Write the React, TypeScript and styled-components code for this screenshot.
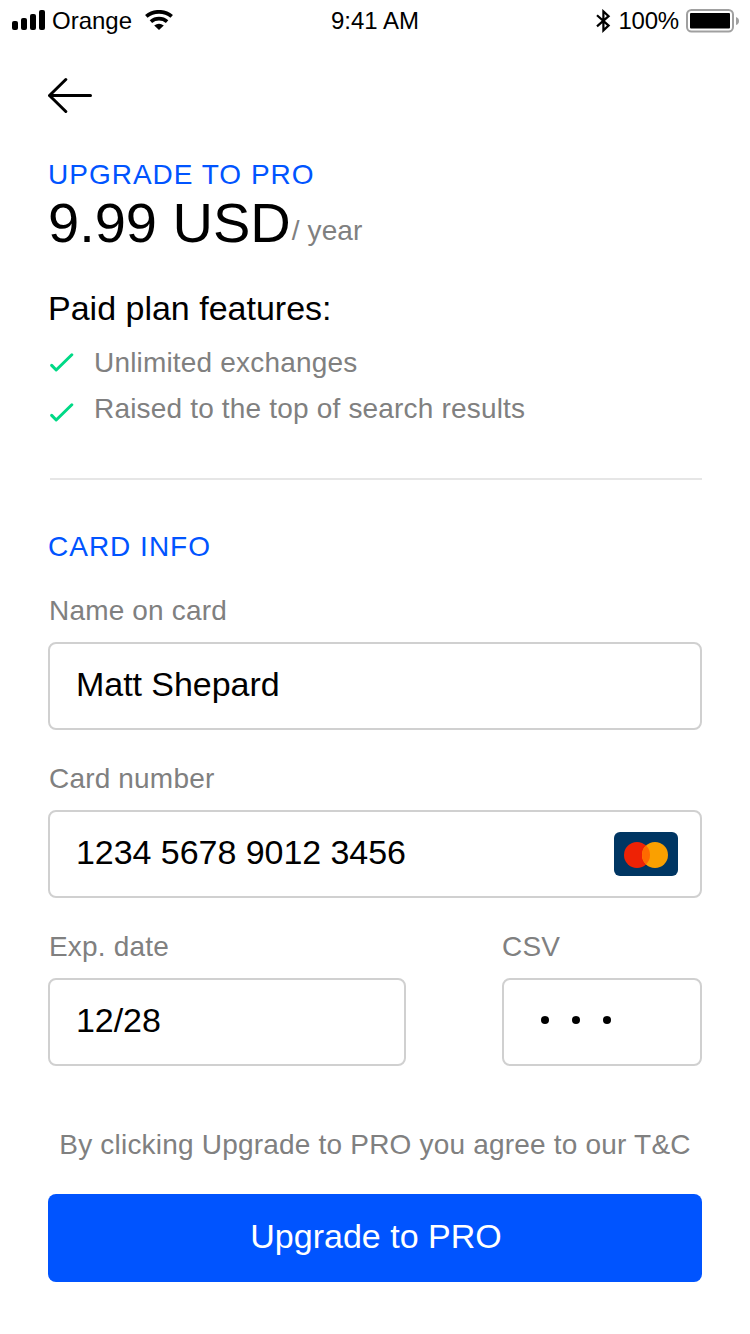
import React from "react";
import styled, { createGlobalStyle } from "styled-components";

const Global = createGlobalStyle`
  * { box-sizing: border-box; }
  body { margin: 0; background: #fff; font-family: "Liberation Sans", Arial, sans-serif; color: #000; }
`;

const Screen = styled.div`
  width: 750px;
  height: 1334px;
  display: flex;
  flex-direction: column;
  background: #fff;
  overflow: hidden;
`;

const StatusBar = styled.header`
  height: 40px;
  display: grid;
  grid-template-columns: 1fr auto 1fr;
  align-items: center;
  padding: 1px 11px 0;
  font-size: 24px;
  line-height: 39px;
`;

const StatusSide = styled.div<{ $end?: boolean }>`
  display: flex;
  align-items: center;
  justify-content: ${p => (p.$end ? "flex-end" : "flex-start")};
  gap: 7px;
  svg { display: block; flex: none; margin-bottom: ${p => (p.$end ? 0 : 1)}px; }
`;

const Carrier = styled.span`
  width: 86px;
  white-space: nowrap;
`;

const Percent = styled.span`
  letter-spacing: -0.2px;
`;

const Body = styled.main`
  display: flex;
  flex-direction: column;
  padding: 36px 48px 0;
`;

const Back = styled.button`
  border: 0;
  background: none;
  padding: 0;
  width: 46px;
  height: 40px;
  svg { display: block; }
`;

const Heading = styled.h2<{ $top: number }>`
  margin: ${p => p.$top}px 0 0;
  font-size: 28px;
  line-height: 32px;
  font-weight: 400;
  letter-spacing: 1px;
  color: #0054ff;
`;

const Price = styled.div`
  display: flex;
  align-items: baseline;
  height: 64px;
  line-height: 64px;
  font-size: 56px;
  white-space: nowrap;
`;

const Period = styled.span`
  position: relative;
  top: -2px;
  font-size: 28px;
  color: #808080;
  margin-left: 1px;
  letter-spacing: 0.1px;
`;

const FeatureTitle = styled.h3`
  margin: 33px 0 0;
  font-size: 34px;
  line-height: 40px;
  font-weight: 400;
`;

const Features = styled.ul`
  list-style: none;
  margin: 12px 0 0;
  padding: 0;
`;

const Feature = styled.li<{ $drop?: number }>`
  display: flex;
  align-items: center;
  gap: 20px;
  height: 46px;
  padding-left: 2px;
  font-size: 28px;
  letter-spacing: 0.18px;
  color: #808080;
  svg { flex: none; margin-top: ${p => p.$drop ?? 0}px; }
`;

const Divider = styled.hr`
  width: 652px;
  height: 2px;
  border: 0;
  background: #e6e6e6;
  margin: 46px 0 0 2px;
`;

const Field = styled.label<{ $w?: number; $top?: number }>`
  display: flex;
  flex-direction: column;
  width: ${p => p.$w ?? 654}px;
  margin-top: ${p => p.$top ?? 32}px;
`;

const Label = styled.span<{ $inset?: number }>`
  height: 48px;
  padding: 1px 0 0 ${p => p.$inset ?? 1}px;
  line-height: 32px;
  font-size: 28px;
  letter-spacing: 0.18px;
  color: #808080;
`;

const Box = styled.div`
  height: 88px;
  border: 2px solid #d0d0d0;
  border-radius: 8px;
  padding: 0 22px 4px 26px;
  display: flex;
  align-items: center;
  justify-content: space-between;
  font-size: 34px;
  letter-spacing: -0.05px;
  svg { display: block; margin-top: 4px; }
`;

const Row = styled.div`
  display: flex;
  justify-content: space-between;
`;

const Dots = styled.div`
  display: flex;
  gap: 23px;
  padding-left: 11px;
`;

const Dot = styled.i`
  width: 8px;
  height: 8px;
  border-radius: 50%;
  background: #000;
`;

const Terms = styled.p`
  margin: 62px 0 0;
  height: 66px;
  line-height: 34px;
  font-size: 28px;
  letter-spacing: 0.2px;
  color: #808080;
  text-align: center;
  white-space: nowrap;
`;

const Submit = styled.button`
  height: 88px;
  border: 0;
  border-radius: 8px;
  background: #0054ff;
  color: #fff;
  font: 34px "Liberation Sans", Arial, sans-serif;
  padding: 0 0 4px 2px;
`;

const Signal = () => (
  <svg width="34" height="20" viewBox="0 0 34 20">
    <rect x="1" y="11" width="6" height="9" rx="2" />
    <rect x="10" y="8" width="6" height="12" rx="2" />
    <rect x="19" y="4" width="6" height="16" rx="2" />
    <rect x="28" y="0" width="6" height="20" rx="2" />
  </svg>
);

const Wifi = () => (
  <svg width="28" height="20" viewBox="0 0 28 20">
    <g fill="none" stroke="#000" strokeWidth="3.8">
      <path d="M1.3 6.4C8.5 0.3 19.5 0.3 26.7 6.4" />
      <path d="M5.9 11.6C10.6 7.7 17.4 7.7 22.1 11.6" />
    </g>
    <path d="M14 20 9.2 15.6Q14 11.8 18.8 15.6Z" />
  </svg>
);

const Bluetooth = () => (
  <svg width="16" height="24" viewBox="0 0 16 24" fill="none" stroke="#000" strokeWidth="2.2">
    <path d="M2 6.2 13.6 16.6 8.4 21.4V2.4l5.2 4.8L2 17.4" />
  </svg>
);

const Battery = () => (
  <svg width="53" height="24" viewBox="0 0 53 24">
    <rect x="1" y="1" width="46" height="21.5" rx="4.5" fill="none" stroke="#a0a0a0" strokeWidth="2" />
    <rect x="4" y="4" width="40" height="15.5" rx="1" />
    <path d="M50 8Q53 9 53 12T50 16Z" fill="#a0a0a0" />
  </svg>
);

const Check = () => (
  <svg width="24" height="20" viewBox="0 0 24 20" fill="none" stroke="#00d986" strokeWidth="3" strokeLinecap="round" strokeLinejoin="round">
    <path d="M1.7 12.4 6.2 17 21.8 1.8" />
  </svg>
);

const CardBrand = () => (
  <svg width="64" height="44" viewBox="0 0 64 44">
    <rect width="64" height="44" rx="6" fill="#003663" />
    <circle cx="23" cy="23" r="13" fill="#ee2205" />
    <circle cx="41" cy="23" r="13" fill="#faa000" />
    <path d="M32 13.6a13 13 0 0 1 0 18.8a13 13 0 0 1 0-18.8Z" fill="#ff6a00" />
  </svg>
);

export default function App() {
  return (
    <Screen>
      <Global />
      <StatusBar>
        <StatusSide>
          <Signal />
          <Carrier>Orange</Carrier>
          <Wifi />
        </StatusSide>
        <span>9:41 AM</span>
        <StatusSide $end>
          <Bluetooth />
          <Percent>100%</Percent>
          <Battery />
        </StatusSide>
      </StatusBar>
      <Body>
        <Back aria-label="Back">
          <svg width="46" height="40" fill="none" stroke="#000" strokeWidth="3" strokeLinecap="round" strokeLinejoin="round">
            <path d="M42.5 19.5H1.5M17.8 3.5 1.5 19.5 17.8 35.5" />
          </svg>
        </Back>
        <Heading $top={43}>UPGRADE TO PRO</Heading>
        <Price>9.99 USD<Period>/ year</Period></Price>
        <FeatureTitle>Paid plan features:</FeatureTitle>
        <Features>
          <Feature><Check />Unlimited exchanges</Feature>
          <Feature $drop={7}><Check />Raised to the top of search results</Feature>
        </Features>
        <Divider />
        <Heading $top={51}>CARD INFO</Heading>
        <Field $top={31}><Label>Name on card</Label><Box>Matt Shepard</Box></Field>
        <Field><Label>Card number</Label><Box>1234 5678 9012 3456<CardBrand /></Box></Field>
        <Row>
          <Field $w={358}><Label>Exp. date</Label><Box>12/28</Box></Field>
          <Field $w={200}><Label $inset={0}>CSV</Label><Box><Dots><Dot /><Dot /><Dot /></Dots></Box></Field>
        </Row>
        <Terms>By clicking Upgrade to PRO you agree to our T&amp;C</Terms>
        <Submit>Upgrade to PRO</Submit>
      </Body>
    </Screen>
  );
}
